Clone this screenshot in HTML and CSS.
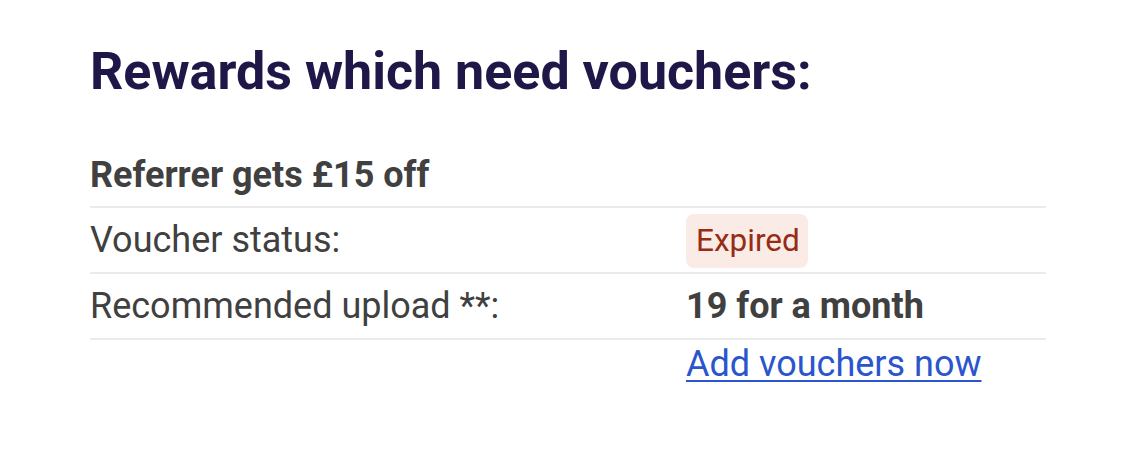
FILE: index.html
```html
<!DOCTYPE html>
<html lang="en">
<head>
    <meta charset="UTF-8">
    <meta name="viewport" content="width=device-width, initial-scale=1.0">
    <title>Rewards</title>
    <link rel="stylesheet" href="styles.css">
</head>
<body>
    <div class="rewards">
        <h2 class="rewards-title">Rewards which need vouchers:</h2>
        <div class="reward">
            <div class="reward-name">Referrer gets £15 off</div>
            <div class="reward-row">
                <span class="label">Voucher status:</span>
                <span class="value"><span class="badge badge-expired">Expired</span></span>
            </div>
            <div class="reward-row">
                <span class="label">Recommended upload **:</span>
                <span class="value strong">19 for a month</span>
            </div>
            <div class="reward-row reward-actions">
                <span class="label"></span>
                <span class="value"><a href="#" class="link">Add vouchers now</a></span>
            </div>
        </div>
    </div>
</body>
</html>
```

FILE: styles.css
```css
body {
    margin: 0;
    padding: 0;
    font-family: 'Roboto', 'Liberation Sans', sans-serif;
    background: #fff;
    color: #404040;
}
.rewards {
    padding: 42px 90px 0 90px;
    width: 956px;
}
.rewards-title {
    margin: 0 0 51px 0;
    font-size: 52px;
    font-weight: 700;
    line-height: 60px;
    color: #1f1748;
}
.reward {
    font-size: 36px;
}
.reward-name {
    font-weight: 700;
    line-height: 44px;
    padding-bottom: 9px;
    border-bottom: 2px solid #ebebeb;
}
.reward-row {
    display: grid;
    grid-template-columns: 596px 1fr;
    align-items: center;
    min-height: 64px;
    line-height: 44px;
    border-bottom: 2px solid #ebebeb;
}
.reward-row.reward-actions {
    min-height: 0;
    padding-top: 2px;
    border-bottom: none;
}
.strong {
    font-weight: 700;
}
.badge {
    display: inline-block;
    margin-top: 2px;
    padding: 8px 8px 8px 10px;
    border-radius: 8px;
    font-size: 31.5px;
    line-height: 38px;
}
.badge-expired {
    background: #fbebe7;
    color: #962c12;
}
.link {
    color: #2a55cc;
    text-decoration: underline;
    text-decoration-thickness: 2px;
    text-underline-offset: 4px;
}
```
